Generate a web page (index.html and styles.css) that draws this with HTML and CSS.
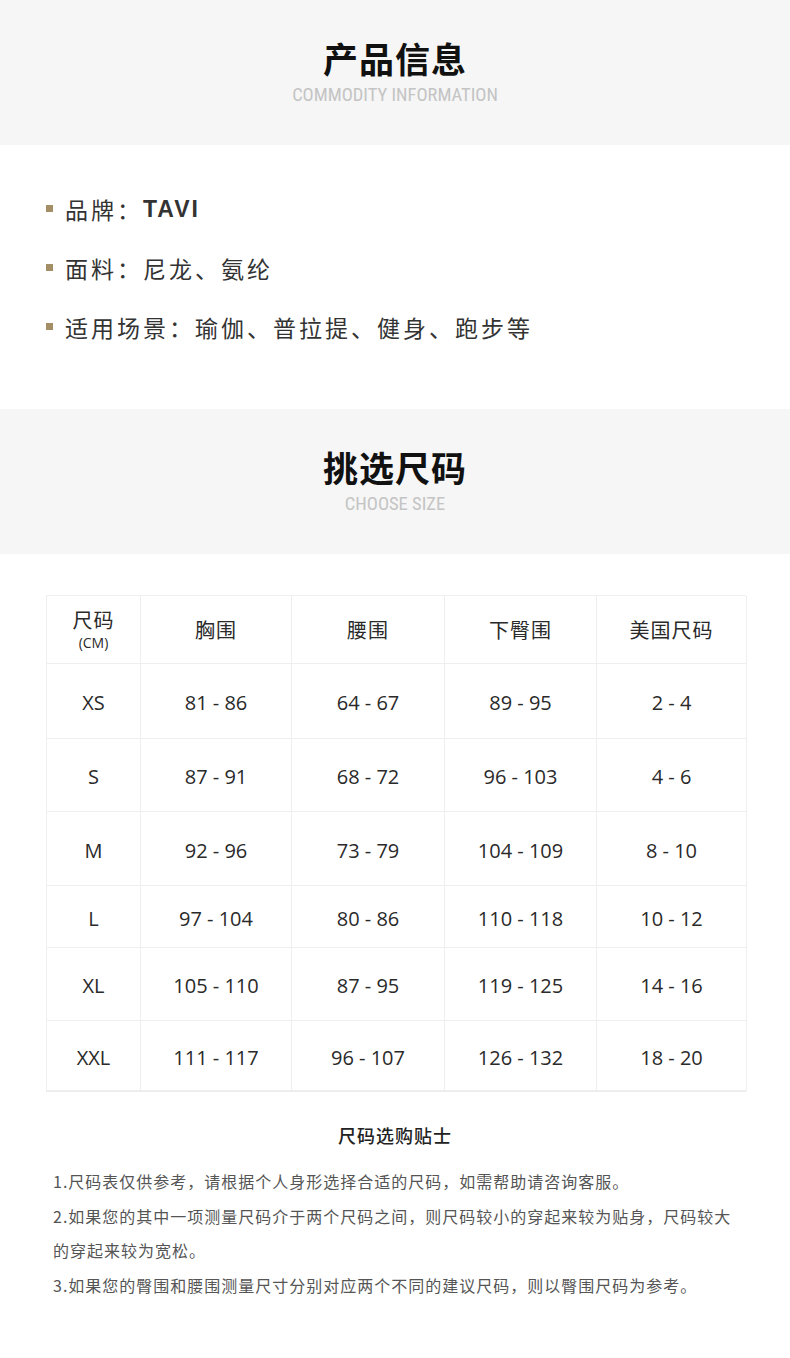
FILE: index.html
```html
<!DOCTYPE html>
<html lang="zh-CN">
<head>
<meta charset="utf-8">
<title>产品信息</title>
<link rel="stylesheet" href="styles.css">
</head>
<body>
<div class="page">
  <header class="band band-1">
    <h1 class="band-title">产品信息</h1>
    <p class="band-sub">COMMODITY INFORMATION</p>
  </header>

  <ul class="info">
    <li class="info-item"><span class="dot"></span>品牌：<b class="brand">TAVI</b></li>
    <li class="info-item"><span class="dot"></span>面料：尼龙、氨纶</li>
    <li class="info-item"><span class="dot"></span>适用场景：瑜伽、普拉提、健身、跑步等</li>
  </ul>

  <header class="band band-2">
    <h1 class="band-title">挑选尺码</h1>
    <p class="band-sub">CHOOSE SIZE</p>
  </header>

  <div class="table-wrap">
    <div class="size-table">
      <div class="cell head"><span class="h-main">尺码</span><span class="h-unit">(CM)</span></div>
      <div class="cell head">胸围</div>
      <div class="cell head">腰围</div>
      <div class="cell head">下臀围</div>
      <div class="cell head">美国尺码</div>

      <div class="cell">XS</div><div class="cell">81 - 86</div><div class="cell">64 - 67</div><div class="cell">89 - 95</div><div class="cell">2 - 4</div>
      <div class="cell">S</div><div class="cell">87 - 91</div><div class="cell">68 - 72</div><div class="cell">96 - 103</div><div class="cell">4 - 6</div>
      <div class="cell">M</div><div class="cell">92 - 96</div><div class="cell">73 - 79</div><div class="cell">104 - 109</div><div class="cell">8 - 10</div>
      <div class="cell">L</div><div class="cell">97 - 104</div><div class="cell">80 - 86</div><div class="cell">110 - 118</div><div class="cell">10 - 12</div>
      <div class="cell">XL</div><div class="cell">105 - 110</div><div class="cell">87 - 95</div><div class="cell">119 - 125</div><div class="cell">14 - 16</div>
      <div class="cell">XXL</div><div class="cell">111 - 117</div><div class="cell">96 - 107</div><div class="cell">126 - 132</div><div class="cell">18 - 20</div>
    </div>
  </div>

  <section class="tips">
    <h2 class="tips-title">尺码选购贴士</h2>
    <p class="tip">1.尺码表仅供参考，请根据个人身形选择合适的尺码，如需帮助请咨询客服。</p>
    <p class="tip">2.如果您的其中一项测量尺码介于两个尺码之间，则尺码较小的穿起来较为贴身，尺码较大</p>
    <p class="tip">的穿起来较为宽松。</p>
    <p class="tip">3.如果您的臀围和腰围测量尺寸分别对应两个不同的建议尺码，则以臀围尺码为参考。</p>
  </section>
</div>
</body>
</html>
```

FILE: styles.css
```css
html, body {
  margin: 0;
  padding: 0;
  background: #ffffff;
}

.page {
  width: 790px;
  min-height: 1358px;
  font-family: "Noto Sans CJK SC", "Noto Sans", sans-serif;
  color: #333;
}

.band {
  background: #f6f6f6;
  height: 145px;
  display: flex;
  flex-direction: column;
  align-items: center;
  box-sizing: border-box;
  padding-top: 36px;
}

.band-title {
  margin: 0;
  font-size: 35px;
  line-height: 44px;
  font-weight: 700;
  color: #111;
  letter-spacing: 1px;
}

.band-sub {
  margin: 4px 0 0;
  font-family: Roboto, "Liberation Sans", sans-serif;
  font-size: 18.5px;
  font-stretch: condensed;
  line-height: 22px;
  color: #c4c4c4;
  letter-spacing: 0;
}

.band-2 {
  padding-top: 36px;
}

.info {
  list-style: none;
  margin: 0;
  padding: 34px 0 0 46px;
  height: 264px;
  box-sizing: border-box;
}

.info-item {
  display: flex;
  align-items: center;
  font-size: 23px;
  letter-spacing: 3px;
  line-height: 40px;
  height: 59px;
  color: #333;
}

.dot {
  width: 7px;
  height: 7px;
  background: #a38e66;
  margin-right: 12px;
  flex: none;
}

.brand {
  font-family: "Liberation Sans", Arial, sans-serif;
  font-weight: 700;
  font-size: 23px;
  letter-spacing: 2px;
  color: #333;
}

.table-wrap {
  padding: 41px 0 0 46px;
}

.size-table {
  display: grid;
  grid-template-columns: 94px 151px 153px 152px 150px;
  grid-template-rows: 68px 75px 73px 74px 62px 73px 70px;
  width: 700px;
  border-top: 1px solid #efefef;
  border-left: 1px solid #efefef;
  box-sizing: border-box;
  border-bottom: 1px solid #ececec;
}

.cell {
  display: flex;
  flex-direction: column;
  align-items: center;
  justify-content: center;
  border-right: 1px solid #efefef;
  border-bottom: 1px solid #efefef;
  font-family: "Open Sans", "Noto Sans", sans-serif;
  font-size: 20px;
  color: #2a2a2a;
  padding-top: 3px;
  box-sizing: border-box;
}

.cell.head {
  font-family: "Noto Sans CJK SC", sans-serif;
  font-size: 20px;
  letter-spacing: 1px;
  padding-top: 0;
  line-height: 24px;
}

.h-main {
  font-size: 20px;
  line-height: 24px;
}

.h-unit {
  font-family: "Open Sans", sans-serif;
  font-size: 14px;
  line-height: 18px;
  letter-spacing: 0;
  margin-top: 2px;
}

.tips {
  padding: 31px 0 0 53px;
}

.tips-title {
  margin: 0 0 17px;
  padding-right: 53px;
  text-align: center;
  font-size: 18px;
  letter-spacing: 1px;
  line-height: 24px;
  font-weight: 500;
  color: #222;
}

.tip {
  margin: 0;
  font-size: 16px;
  letter-spacing: 1px;
  line-height: 34.5px;
  color: #555;
}
```
